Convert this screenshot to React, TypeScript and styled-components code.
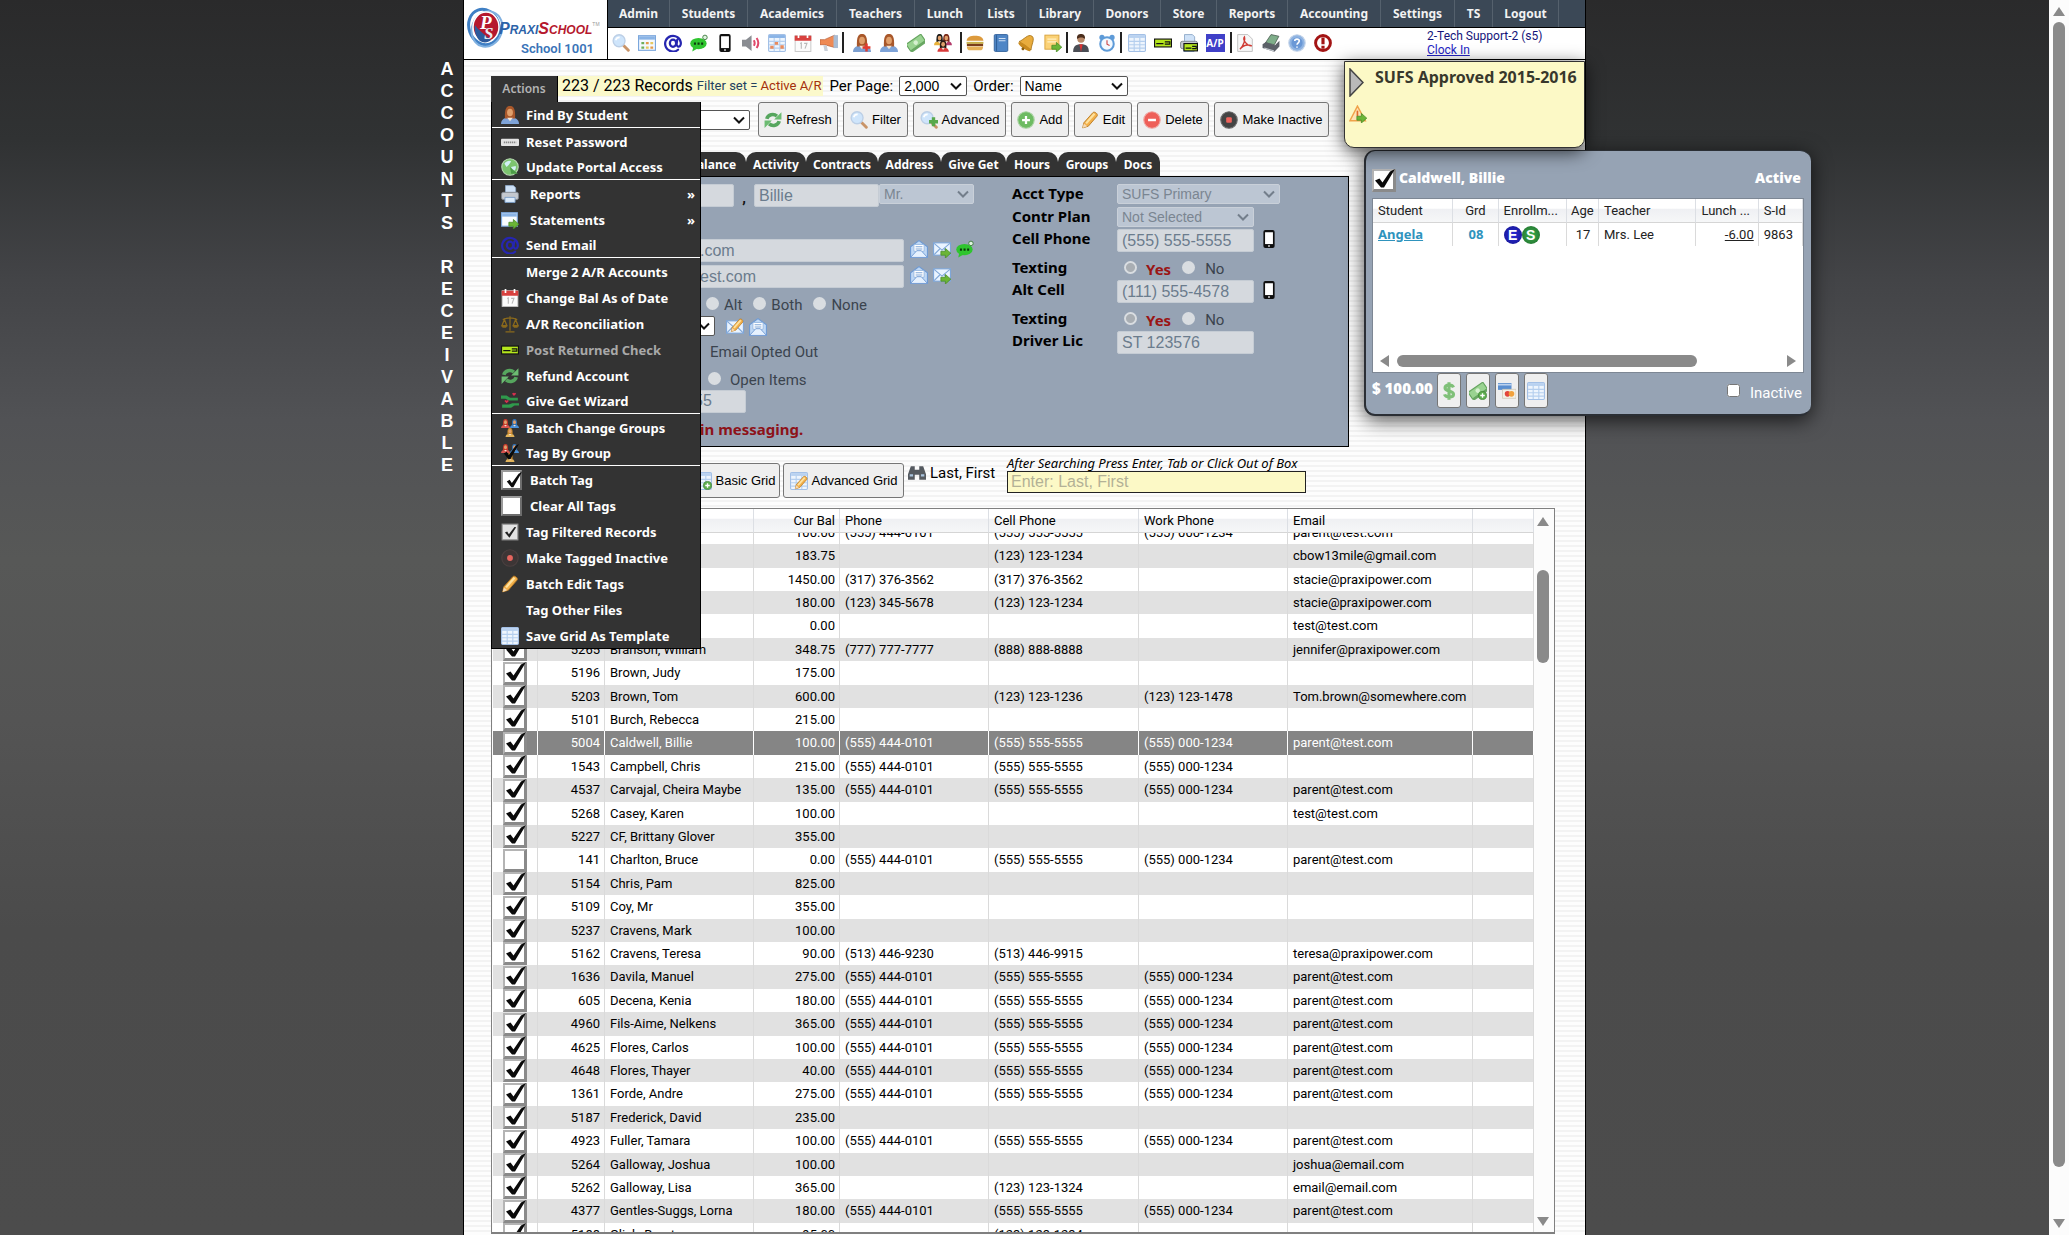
import React, { useEffect, useRef, useState } from "react";
import styled, { createGlobalStyle, css } from "styled-components";

const REG = `Roboto, "Liberation Sans", sans-serif`;
const BOLD = `"Noto Sans", "Open Sans", sans-serif`;
const ARIAL = `"Liberation Sans", Arial, sans-serif`;
const SLATE = "#96a3b4";
const DARK = "#333333";
const NOTE = "#fcf9c6";

const Global = createGlobalStyle`
  *, *::before, *::after { box-sizing: border-box; }
  html, body { margin: 0; height: 100%; overflow: hidden; }
  body { font-family: ${REG}; color: #000; }
  #root { height: 100%; }
  button, input, select { margin: 0; font-family: ${ARIAL}; }
`;

/* ---------- icons ---------- */

const person = (x: number, y: number, hair: string, body: string, k = 1) => (
  <g transform={`translate(${x} ${y}) scale(${k})`}>
    <path d="M0 16c0-4 3-6 8-6s8 2 8 6z" fill={body} />
    <path d="M3.500 11C3 2 5 0 8 0s5 2 4.500 11z" fill={hair} />
    <ellipse cx="8" cy="5.800" rx="2.600" ry="3.400" fill="#e0a06c" />
    <path d="M5.500 10.500l2.500 3 2.500-3z" fill="#f4e4d4" />
  </g>
);
const cheque = (x = 0, y = 4, w = 16, h = 8) => (
  <g>
    <rect x={x + 0.5} y={y + 0.5} width={w - 1} height={h - 1} fill="#b5e61d" stroke="#111" />
    <path d={`M${x + 2} ${y + 4.5}h${w * 0.4}M${x + w * 0.6} ${y + 3}h${w * 0.28}v2h-${w * 0.28}`} stroke="#111" fill="none" />
  </g>
);
const sheet = (
  <g>
    <rect x=".5" y=".5" width="15" height="15" rx="1" fill="#eef5fd" stroke="#a3c0e6" />
    <path d="M1 1h14v2.500H1z" fill="#b9d2f0" />
    <path d="M1 6.500h14M1 9.500h14M1 12.500h14M5.500 3v12M10.500 3v12" stroke="#b5cfee" />
  </g>
);
const lens = (
  <g>
    <path d="M10.500 10.500l4 4" stroke="#c99468" strokeWidth="2.600" strokeLinecap="round" />
    <circle cx="6.300" cy="6" r="5.300" fill="#cfe5fb" stroke="#bccfe6" strokeWidth="1.200" />
    <path d="M3.300 5.500c.5-2 2-2.500 3.500-2.500" stroke="#fff" strokeWidth="1.400" fill="none" />
  </g>
);
const money = (
  <g transform="rotate(-35 8 8)">
    <rect x="0" y="6" width="16" height="7" fill="#6aa864" />
    <rect x="0" y="4" width="16" height="7" fill="#9ad391" stroke="#66a560" />
    <circle cx="8" cy="7.500" r="2" fill="#d6f0d0" />
  </g>
);
const envelope = (
  <g>
    <rect x=".5" y="2.500" width="15" height="11" fill="#eaf4ff" stroke="#7fa6d8" />
    <path d="M1 3l7 6L15 3M1 13l5-5M15 13l-5-5" stroke="#7fa6d8" fill="none" />
  </g>
);
const arrowGreen = <path d="M7 10h4V7.500l4.800 4.200L11 16v-2.500H7z" fill="#6bb536" stroke="#4a8c26" strokeWidth=".7" />;
const pencil = (
  <g>
    <path d="M1.500 15l1-4.500L10.500 1.500c1.500-1.500 5 1.200 3.800 3L6.500 13.500z" fill="#f3b04a" stroke="#b97a22" strokeWidth=".8" />
    <path d="M4.500 11l7.500-8.500" stroke="#fde2a0" strokeWidth="2" />
    <path d="M1.500 15l1-4 3 2.500z" fill="#f4d9b5" />
  </g>
);
const recycle = (
  <g fill="none" stroke="#56a65e" strokeWidth="3.200">
    <path d="M2.500 7c1-4 6-5 9-2.500" />
    <path d="M13.500 9c-1 4-6 5-9 2.500" />
    <path d="M9 7.500h6.500V1zM7 8.500H.5V15z" fill="#6cbc72" stroke="none" />
  </g>
);
const tick = <path d="M2.500 8.500L5 6.800l2 3L13 1.500 16 0 8.300 13.500H6.600z" fill="#0b0b0b" />;
const plusDot = (
  <g>
    <circle cx="12" cy="12" r="3.600" fill="#5eae4f" stroke="#3c7e33" strokeWidth=".6" />
    <path d="M12 10v4M10 12h4" stroke="#fff" strokeWidth="1.200" />
  </g>
);
const printer = (
  <g>
    <path d="M4 .5h7l2 2V8H4z" fill="#cfe2f8" stroke="#8fa9c8" strokeWidth=".8" />
    <rect x=".5" y="6.500" width="15" height="6.500" rx="1.500" fill="#c4c8cf" stroke="#7d838c" strokeWidth=".8" />
    <path d="M3.500 11h9v4.500h-9z" fill="#dcebfb" stroke="#7b9ec8" strokeWidth=".8" />
  </g>
);
const groups = (
  <g>
    {person(0, 0, "#c0392b", "#d9534f", 0.5)}
    {person(8, 0, "#2f6fb0", "#4a90d9", 0.5)}
    {person(4, 8, "#c98a2b", "#e2b35a", 0.5)}
  </g>
);
const disc = (fill: string, stroke: string) => <circle cx="8" cy="8" r="7.300" fill={fill} stroke={stroke} />;

const ICONS: Record<string, React.ReactNode> = {
  search: lens,
  searchPlus: (<g>{lens}<path d="M8 8h2.500V5.500h3V8H16v3h-2.500v2.500h-3V11H8z" fill="#58a94c" /></g>),
  table: (
    <g>
      <rect x=".5" y="1.500" width="15" height="13" fill="#f4f9ff" stroke="#7ba7dc" />
      <path d="M1 2h14v3H1z" fill="#8ab4e6" />
      <path d="M3 7h2.500v2H3zM3 11h2.500v2H3z" fill="#6fae5a" />
      <path d="M7 7h2.500v2H7zM11 11h2.500v2H11z" fill="#e29a4a" />
      <path d="M11 7h2.500v2H11zM7 11h2.500v2H7z" fill="#e7c860" />
    </g>
  ),
  at: (
    <g fill="none" stroke="#2626b0" strokeLinecap="round">
      <path d="M12.500 14A7 7 0 1 1 15 8c0 3-1.500 3.500-2.500 3.200S11 9.500 11.300 8l.5-3" strokeWidth="2" />
      <ellipse cx="8" cy="8.200" rx="2.800" ry="3.200" strokeWidth="2" />
    </g>
  ),
  chat: (
    <g>
      <ellipse cx="7.500" cy="8.500" rx="7.300" ry="5" fill="#2fc52f" />
      <path d="M3 11l-1 4.500 5.500-3z" fill="#2fc52f" />
      <path d="M3.500 8.500h1.800M6.700 8.500h1.800M9.900 8.500h1.800" stroke="#0c3a0c" strokeWidth="2" />
      <circle cx="13.300" cy="3" r="2" fill="#dff3df" stroke="#3c7a3c" strokeWidth=".8" />
    </g>
  ),
  phone: (
    <g>
      <rect x="3" y="0" width="10" height="16" rx="1.800" fill="#101010" />
      <rect x="4.500" y="2" width="7" height="10.500" fill="#fff" />
      <circle cx="8" cy="14.200" r=".9" fill="#ccc" />
    </g>
  ),
  speaker: (
    <g>
      <path d="M0 5h3.500L8.500 1v14L3.500 11H0z" fill="#8a8d92" />
      <path d="M10.500 5.500q1.500 2.500 0 5M13 3.500q3 4.500 0 9" stroke="#e0486a" strokeWidth="1.800" fill="none" />
    </g>
  ),
  calGrid: (
    <g>
      {sheet}
      <path d="M1 1h14v2.500H1z" fill="#8ab4e6" />
      <path d="M6 7h3v2.500H6zM2 10.500h3V13H2zM11 10h3v3h-3z" fill="#e98b5c" />
    </g>
  ),
  calendar: (
    <g>
      <rect x="1" y="1.500" width="14" height="14" fill="#fbfbfb" stroke="#c5c5c5" strokeWidth=".8" />
      <path d="M.6 1.500h14.800V6H.6z" fill="#d8413f" />
      <path d="M4 0v3.500M12 0v3.500" stroke="#fff" strokeWidth="1.500" />
      <path d="M5.500 8.500L6.500 8v5M9 8.300h2.500L9.800 13" stroke="#b9b9b9" fill="none" />
    </g>
  ),
  megaphone: (
    <g>
      <path d="M0 5h4l9-4v11L4 9.500H0z" fill="#ef8a54" stroke="#b65a30" strokeWidth=".6" />
      <path d="M12 1h4v11.500h-4z" fill="#a9bcd3" />
      <path d="M3 10h3l1 5H4z" fill="#c9cfd8" />
    </g>
  ),
  userAdd: (<g>{person(0, 0, "#a8572a", "#7c9fd0")}<path d="M12 8.500v7M8.500 12h7" stroke="#e23b30" strokeWidth="2.200" /></g>),
  user: person(0, 0, "#a8572a", "#7ea3d8"),
  money,
  moneyAdd: (<g>{money}{plusDot}</g>),
  people: (<g>{person(0, 0, "#1c1c1c", "#e8b13a", 0.62)}{person(6, 0, "#7a2a1a", "#b33a6a", 0.62)}{person(3, 5.5, "#2a1a14", "#d83a3a", 0.64)}</g>),
  burger: (
    <g>
      <path d="M.5 6C1 2.500 4 1.500 8 1.500s7 1 7.500 4.500z" fill="#dd9a3c" />
      <path d="M.5 7h15v1.800H.5z" fill="#c9b24a" />
      <path d="M.8 8.800h14.400v2H.8z" fill="#7a3d1c" />
      <path d="M.8 11h14.400c0 2.500-1 3.500-3 3.500H3.800c-2 0-3-1-3-3.500z" fill="#e6b158" />
    </g>
  ),
  book: (
    <g>
      <rect x="2" y=".5" width="12" height="15" rx="1" fill="#4f86c6" stroke="#2f5f98" strokeWidth=".8" />
      <path d="M4 1v14" stroke="#2f5f98" />
      <path d="M6 4h6M6 6h6" stroke="#cfe0f4" />
    </g>
  ),
  bell: (
    <g transform="rotate(35 8 8)">
      <path d="M8 .5c-4 0-4 7-6.500 10.500h13C12 7.500 12 .5 8 .5z" fill="#e9ac3d" stroke="#a87418" strokeWidth=".7" />
      <ellipse cx="8" cy="12" rx="6.500" ry="1.800" fill="#c98a1e" />
      <circle cx="8" cy="14.300" r="1.300" fill="#8d5f12" />
    </g>
  ),
  note: (<g><rect x=".8" y="1" width="12.500" height="12.500" fill="#fbd277" stroke="#d7a13a" strokeWidth=".8" /><path d="M3 4.500h8M3 7h8" stroke="#fff0c4" />{arrowGreen}</g>),
  man: (
    <g>
      <path d="M1 16c0-5 2-7 7-7s7 2 7 7z" fill="#4b4e55" />
      <path d="M6.500 9h3L8 16z" fill="#d33" />
      <circle cx="8" cy="4.500" r="3.300" fill="#b98a6a" />
      <path d="M4.500 4.500C4 1 6 0 8 0s4 1 3.500 4.500C10.500 2.500 6 2.500 4.500 4.500z" fill="#4a2d1c" />
    </g>
  ),
  clock: (
    <g>
      <circle cx="3.500" cy="3" r="2.300" fill="#5e9bd8" />
      <circle cx="12.500" cy="3" r="2.300" fill="#5e9bd8" />
      <circle cx="8" cy="8.800" r="6" fill="#f3f9ff" stroke="#5e9bd8" strokeWidth="1.800" />
      <path d="M8 5.500V9l2.300 1.200" stroke="#c44" fill="none" />
    </g>
  ),
  grid: sheet,
  cheque: cheque(),
  printerCheque: (<g>{printer}{cheque(3, 8, 13, 7.5)}</g>),
  pdf: (
    <g>
      <path d="M1.500.5h9l4 4v11h-13z" fill="#f7f7f7" stroke="#bdbdbd" strokeWidth=".8" />
      <path d="M3.500 13.500C7 10 8.500 5 7.500 2.500 5.500 5 10 11 14 10.500 10 9 6 10.500 3.500 13.500z" fill="none" stroke="#cf3a33" strokeWidth="1.200" />
    </g>
  ),
  scanner: (
    <g>
      <path d="M3 8l5-7.500 7 1.500-4 7.500z" fill="#7fae8a" stroke="#4a5a50" strokeWidth=".7" />
      <path d="M.5 9l3-2 8 3 4-4v5l-4.500 4.800L.5 12.500z" fill="#5b6068" />
      <path d="M2 12.500l8.500 2.500" stroke="#c5cad0" />
    </g>
  ),
  help: (
    <g>
      {disc("#8fb4e2", "#c3d3e8")}
      <circle cx="8" cy="8" r="5" fill="#6a98d6" />
      <path d="M6 6.300C6 4 10 4 10 6.300 10 7.800 8 7.800 8 9.500M8 11v1.300" stroke="#fff" strokeWidth="1.400" fill="none" />
    </g>
  ),
  alert: (
    <g>
      <circle cx="8" cy="8" r="6.600" fill="#fff" stroke="#a31414" strokeWidth="2.600" />
      <path d="M8 3v6M8 10.500v2.500" stroke="#a31414" strokeWidth="2.800" />
    </g>
  ),
  refresh: recycle,
  add: (<g>{disc("#6dbb62", "#a9d3a2")}<path d="M8 4.500v7M4.500 8h7" stroke="#fff" strokeWidth="2" /></g>),
  pencil,
  remove: (<g>{disc("#ee5f58", "#f0a5a1")}<path d="M4.500 8h7" stroke="#fff" strokeWidth="2.200" /></g>),
  record: (<g>{disc("#444", "#6a6a6a")}<rect x="5.500" y="5.500" width="5" height="5" rx="1" fill="#f0635c" /></g>),
  recordDark: (<g>{disc("#3d3535", "#4b4040")}<circle cx="8" cy="8" r="2.600" fill="#e5655e" /></g>),
  keyboard: (<g><rect x="0" y="5" width="16" height="6.500" rx=".8" fill="#e4e4e4" /><path d="M2.500 8.300h11" stroke="#888" strokeDasharray="1.200 .6" strokeWidth="1.400" /></g>),
  globe: (
    <g>
      {disc("#7cc46f", "#b9d9b4")}
      <path d="M3 5c2-3 5-3 6-2L7 6 5 8zM9 8l4-1c1 2-1 5-3 5z" fill="#d3f0f5" />
      <path d="M8 8l7 6H9z" fill="#4c9c46" />
    </g>
  ),
  printer,
  windowArrow: (<g><rect x=".5" y="1.500" width="14" height="12" fill="#fafdff" stroke="#7ba7dc" /><path d="M1 2h13v3H1z" fill="#8ab4e6" />{arrowGreen}</g>),
  scales: (
    <g fill="none" stroke="#8b6a1c" strokeWidth="1.100">
      <path d="M8 1v13M4 15h8M1.500 4q6.500-3 13 0M3 4L.8 9.500h4.400zM13 4l-2.200 5.500h4.400z" />
      <path d="M.5 9.500h5l-1 1.500h-3zM10.500 9.500h5l-1 1.500h-3z" fill="#8b6a1c" strokeWidth=".5" />
    </g>
  ),
  hands: (
    <g>
      <path d="M0 3h5l3 2h7v2.500H7L4 6H0zM16 12h-4l-3 2H1v-3h6l3-1h6z" fill="#2f9a4c" />
      <path d="M11.500 3.500L9.800 1.500l1-.9.9.6.8-.6 1 .9zM5 10L3 8l1-1 1 .7L6 7l1 1z" fill="#d9304f" />
    </g>
  ),
  groups,
  groupsTag: (<g>{groups}{tick}</g>),
  tagGrey: (<g><rect x="1" y="1" width="14" height="14" fill="#e2e2e2" stroke="#8d8d8d" /><path d="M3.500 8.500l2-1 1.500 2.500 5-6.500 1.500.3L7.500 13z" fill="#222" /></g>),
  mailOpen: (
    <g>
      <path d="M.5 6L8 .5 15.500 6v9.500H.5z" fill="#bfd8f5" stroke="#6f9ad2" />
      <path d="M3.500 4h9v6h-9z" fill="#fff" stroke="#8fb2de" strokeWidth=".7" />
      <path d="M5 6h6M5 8h6" stroke="#7fa6d8" />
      <path d="M.5 15.500L6 9.500h4l5.500 6z" fill="#e6f1fe" stroke="#6f9ad2" strokeWidth=".8" />
    </g>
  ),
  mailSend: (<g>{envelope}{arrowGreen}</g>),
  mailEdit: (<g>{envelope}<g transform="translate(3.500 0) scale(.8)">{pencil}</g></g>),
  binoculars: (
    <g fill="#555a60">
      <path d="M2.500 2h3.500v3h4V2h3.500L16 9v5h-6V9.500H6V14H0V9z" />
      <path d="M1.500 10h3M11.500 10h3" stroke="#a9c3dd" strokeWidth="2" />
    </g>
  ),
  warn: (<g><path d="M7.500 1L14.500 14H.8z" fill="#fde3b4" stroke="#f0a24a" strokeWidth="1.300" /><path d="M7.500 5v5" stroke="#e06a2a" strokeWidth="1.500" />{arrowGreen}</g>),
  gridAdd: (<g>{sheet}{plusDot}</g>),
  gridEdit: (<g>{sheet}<g transform="translate(3.500 3) scale(.8)">{pencil}</g></g>),
  dollar: (
    <g fill="none" stroke="#7fc078" strokeWidth="2.800">
      <path d="M12 4.800C11 2 4.500 2 4.500 5.300S12 7.500 12 10.800 5 14 4 11M8 .3v15.400" />
    </g>
  ),
  cards: (
    <g>
      <path d="M0 1h12v6H0z" fill="#5b8fd0" />
      <path d="M0 2.500h12" stroke="#dce9f8" />
      <path d="M4 6.500h12v8H4z" fill="#f3f0e6" stroke="#c9c2ad" strokeWidth=".6" />
      <circle cx="8.500" cy="10.500" r="2.500" fill="#e2453c" />
      <circle cx="12" cy="10.500" r="2.500" fill="#f2a23c" />
    </g>
  ),
};

const Svg = styled.svg`
  display: block;
  flex: none;
`;
const Icon = ({ name, size = 18 }: { name: string; size?: number }) => (
  <Svg width={size} height={size} viewBox="0 0 16 16" aria-hidden="true">
    {ICONS[name]}
  </Svg>
);

/* ---------- page frame ---------- */

const Desktop = styled.div`
  display: flex;
  height: 100vh;
  background: linear-gradient(#2a2a2b 0, #303233 140px, #434447 280px, #515255 420px, #575857 560px, #545454 720px, #4b4b4b 930px, #4c4c4c 100%);
`;
const Stage = styled.div`
  flex: 1;
  display: grid;
  grid-template-columns: 1fr 1123px 1fr;
  min-width: 0;
`;
const SideTitle = styled.h1`
  justify-self: end;
  margin: 0;
  padding: 58px 8px 0 0;
  width: 24px;
  font: bold 18px/22px ${ARIAL};
  color: #fff;
  text-align: center;
  white-space: pre-line;
`;
const Page = styled.div`
  position: relative;
  display: flex;
  flex-direction: column;
  min-height: 0;
  border: solid #000;
  border-width: 0 1px;
  background: repeating-linear-gradient(#f3f3f3 0 2px, #fdfdfd 2px 5px);
`;
const WindowBar = styled.div`
  display: flex;
  flex-direction: column;
  align-items: center;
  width: 20px;
  padding: 7px 0;
  background: #fcfcfc;
`;
const WindowThumb = styled.div`
  flex: 1;
  width: 12px;
  margin: 6px 0 52px;
  border-radius: 6px;
  background: #8a8a8a;
`;
const Arrow = styled.span<{ $dir: "up" | "down" | "left" | "right" }>`
  flex: none;
  width: 0;
  height: 0;
  border: 0 solid transparent;
  ${({ $dir }) =>
    ({
      up: css`border-width: 0 6px 9px; border-bottom-color: #8a8a8a;`,
      down: css`border-width: 9px 6px 0; border-top-color: #8a8a8a;`,
      left: css`border-width: 6px 9px 6px 0; border-right-color: #8a8a8a;`,
      right: css`border-width: 6px 0 6px 9px; border-left-color: #8a8a8a;`,
    })[$dir]}
`;

/* ---------- header ---------- */

const Header = styled.header`
  display: flex;
  height: 60px;
  border-bottom: 1px solid #000;
  background: #fff;
`;
const Brand = styled.div`
  display: flex;
  width: 144px;
  padding: 7px 0 0 3px;
  border-right: 1px solid #000;
`;
const BrandText = styled.div`
  flex: 1;
  padding: 14px 0 0 0;
`;
const BrandName = styled.div`
  display: flex;
  margin-left: -6px;
  font: italic 900 12px/16px ${ARIAL};
  color: #2b62a8;
  white-space: nowrap;
  em { color: #b5182e; }
  big { font-size: 16px; }
  sup { font: 5px/6px ${ARIAL}; color: #999; }
`;
const SchoolName = styled.div`
  padding-left: 16px;
  font: 600 13px/22px ${REG};
  color: #3a74b8;
  white-space: nowrap;
`;
const HeaderMain = styled.div`
  flex: 1;
  display: flex;
  flex-direction: column;
`;
const Nav = styled.nav`
  display: flex;
  height: 28px;
  border-bottom: 1px solid #000;
  background: #3b4856;
`;
const NavLink = styled.a<{ $w: number }>`
  width: ${(p) => p.$w}px;
  border-right: 1px solid #55616d;
  font: bold 12px/27px ${BOLD};
  color: #f2f2f2;
  text-align: center;
  text-decoration: none;
`;
const Tools = styled.div`
  flex: 1;
  display: flex;
  align-items: center;
  padding-bottom: 2px;
`;
const ToolGroup = styled.div<{ $pitch?: number; $pad?: number }>`
  display: grid;
  grid-auto-flow: column;
  grid-auto-columns: ${(p) => p.$pitch ?? 26}px;
  padding: 0 ${(p) => p.$pad ?? 0}px;
  & + & { border-left: 2px solid #222; }
`;
const Tool = styled.button`
  display: grid;
  place-items: center;
  height: 21px;
  padding: 0;
  border: 0;
  background: none;
`;
const ApBadge = styled.span`
  width: 19px;
  background: #4040c8;
  font: bold 10px/18px ${BOLD};
  color: #fff;
`;
const UserBox = styled.div`
  margin-left: auto;
  width: 158px;
  font: 12px/14px ${REG};
  color: #14147a;
  a { display: block; color: #2323c4; }
`;

/* ---------- command rows ---------- */

const Body = styled.main`
  flex: 1;
  display: flex;
  flex-direction: column;
  min-height: 0;
  padding: 16px 30px 1px 27px;
`;
const StatusRow = styled.div`
  display: flex;
  height: 26px;
`;
const ActionsTab = styled.button`
  width: 67px;
  border: 0;
  border-right: 1px solid #000;
  background: ${DARK};
  font: 600 12px/24px ${BOLD};
  color: #b4b4b4;
`;
const Counts = styled.div`
  display: flex;
  height: 20px;
  padding: 0 2px 0 4px;
  gap: 4px;
  background: #fbf9cb;
  line-height: 20px;
  white-space: nowrap;
  strong { font-weight: 400; font-size: 16px; }
  span { font-size: 13px; color: #23405f; }
  b { font-weight: 400; color: #a4300c; }
`;
const Pick = styled.label`
  display: flex;
  gap: 6px;
  height: 20px;
  padding-left: 6px;
  font-size: 15px;
  line-height: 20px;
  white-space: nowrap;
`;
const ChevronWrap = styled.span<{ $w: number }>`
  display: grid;
  flex: none;
  width: ${(p) => p.$w}px;
  > * { grid-area: 1 / 1; }
  > svg { justify-self: end; align-self: center; margin-right: 5px; pointer-events: none; }
`;
const SelectBox = styled.select`
  appearance: none;
  width: 100%;
  height: 20px;
  padding: 0 4px;
  border: 1px solid #555;
  border-radius: 2px;
  background: #fff;
  font-size: 14px;
  color: #000;
  opacity: 1;
  &:disabled { border-color: #c9d0d9; background: #bcc6d3; color: #7a8591; opacity: 1; }
`;
const Select = ({ value, w, off, label }: { value: string; w: number; off?: boolean; label: string }) => (
  <ChevronWrap $w={w}>
    <SelectBox aria-label={label} disabled={off} defaultValue={value}>
      <option>{value}</option>
    </SelectBox>
    <svg width="12" height="8" viewBox="0 0 12 8" aria-hidden="true">
      <path d="M1 1.500l5 5 5-5" fill="none" stroke={off ? "#737e8b" : "#111"} strokeWidth="2" />
    </svg>
  </ChevronWrap>
);
const CommandRow = styled.div`
  display: flex;
  align-items: center;
  gap: 5px;
  height: 35px;
  padding-left: 187px;
  > span:first-child { margin-right: 3px; }
`;
const Push = styled.button<{ $w: number }>`
  display: flex;
  flex: none;
  align-items: center;
  justify-content: center;
  gap: 4px;
  width: ${(p) => p.$w}px;
  height: 35px;
  padding: 0;
  border: 1px solid #767676;
  border-radius: 3px;
  background: #efefef;
  font-size: 13px;
  color: #000;
  white-space: nowrap;
`;

/* ---------- account panel ---------- */

const Tabs = styled.div`
  display: flex;
  height: 24px;
  margin-top: 15px;
  padding-left: 188px;
`;
const Tab = styled.button<{ $w: number }>`
  width: ${(p) => p.$w}px;
  padding: 0;
  border: 0;
  border-radius: 10px 10px 0 0;
  background: ${DARK};
  font: bold 12px/26px ${BOLD};
  color: #fff;
  white-space: nowrap;
`;
const Panel = styled.section`
  display: flex;
  justify-content: space-between;
  width: 858px;
  height: 271px;
  padding: 7px 68px 0 188px;
  border: 1px solid #000;
  background: ${SLATE};
`;
const Stack = styled.div`
  display: flex;
  flex-direction: column;
`;
const Line = styled.div<{ $h: number; $gap?: number; $top?: boolean }>`
  display: flex;
  align-items: ${(p) => (p.$top ? "flex-start" : "center")};
  gap: ${(p) => p.$gap ?? 0}px;
  height: ${(p) => p.$h}px;
  font-size: 15px;
  color: #3b444e;
  white-space: nowrap;
`;
const Field = styled.input<{ $w: number; $pad?: number }>`
  width: ${(p) => p.$w}px;
  height: 23px;
  padding: 0 0 0 ${(p) => p.$pad ?? 4}px;
  border: 1px solid #c5ccd4;
  border-radius: 2px;
  background: #d5d9de;
  font-size: 16px;
  color: #6b7c8d;
`;
const Comma = styled.span`
  width: 20px;
  padding-top: 5px;
  text-align: center;
  font-weight: 700;
  color: #111;
`;
const Icons = styled.span`
  display: flex;
  gap: 5px;
  padding: 1px 0 0 6px;
`;
const IconButton = styled.button`
  padding: 0;
  border: 0;
  background: none;
`;
const Dot = styled.input`
  appearance: none;
  width: 13px;
  height: 13px;
  border-radius: 50%;
  background: #d9dde1;
  &:checked { background: radial-gradient(circle, #a9aeb3 0 4px, #d9dde1 5px); }
`;
const Choices = styled.div<{ $pad: number }>`
  display: flex;
  gap: 11px;
  padding-left: ${(p) => p.$pad}px;
`;
const Choice = styled.label<{ $gap: number; $hot?: boolean }>`
  display: flex;
  align-items: center;
  gap: ${(p) => p.$gap}px;
  ${(p) => p.$hot && css`font: bold 15px/20px ${BOLD}; color: #9a1515;`}
  span { padding-top: 4px; }
`;
const OptedOut = styled.span`
  padding-left: 30px;
`;
const Alert = styled.p`
  margin: 0;
  padding-left: 20px;
  font: bold 15px/32px ${BOLD};
  color: #8d1219;
`;
const Caption = styled.label`
  width: 105px;
  font: bold 15px/18px ${BOLD};
  color: #000;
`;

/* ---------- search row ---------- */

const SearchRow = styled.div`
  display: flex;
  align-items: flex-start;
  height: 61px;
  padding: 16px 0 0 198px;
`;
const GridButtons = styled.div`
  display: flex;
  gap: 3px;
`;
const NameMode = styled.span`
  display: flex;
  align-items: center;
  gap: 4px;
  width: 103px;
  padding-left: 4px;
  font-size: 15px;
  line-height: 20px;
  white-space: nowrap;
`;
const Finder = styled.label`
  display: flex;
  flex-direction: column;
  width: 299px;
  margin-top: -7px;
  font: italic 13px/15px ${BOLD};
  white-space: nowrap;
`;
const FinderInput = styled.input`
  height: 22px;
  padding: 0 3px;
  border: 1px solid #222;
  background: ${NOTE};
  font-size: 16px;
  &::placeholder { color: #b3b196; opacity: 1; }
`;

/* ---------- grid ---------- */

const GridFrame = styled.section`
  flex: 1;
  display: flex;
  min-height: 0;
  border: 1px solid #808080;
  border-width: 1px 1px 2px;
  background: #fcfcfc;
`;
const Viewport = styled.div`
  flex: 1;
  margin-left: 1px;
  overflow: auto;
  scrollbar-width: none;
`;
const Data = styled.table`
  width: 100%;
  table-layout: fixed;
  border-spacing: 0;
  font-size: 13px;
  background: #fff;
`;
const HeadCell = styled.th<{ $right?: boolean; $mid?: boolean }>`
  position: sticky;
  top: 0;
  z-index: 1;
  height: 24px;
  padding: ${(p) => (p.$mid ? "0" : "0 4px 0 5px")};
  border-right: 1px solid #dcdfe4;
  border-bottom: 1px solid #d5d5d5;
  background: linear-gradient(#fff 40%, #eff0f3 45%, #f6f7f8 100%);
  font-weight: 400;
  text-align: ${(p) => (p.$right ? "right" : p.$mid ? "center" : "left")};
  overflow: hidden;
  white-space: nowrap;
  text-overflow: ellipsis;
`;
const Row = styled.tr<{ $on?: boolean }>`
  height: 23px;
  &:nth-child(5n + 2), &:nth-child(5n) { height: 24px; }
  &:nth-child(even) { background: #e1e1e1; }
  ${(p) => p.$on && css`&&& { background: #858585; color: #fff; } td { border-color: #fff; }`}
`;
const Cell = styled.td<{ $right?: boolean; $mid?: boolean }>`
  padding: 0 4px 0 5px;
  border-right: 1px solid #dadada;
  text-align: ${(p) => (p.$right ? "right" : p.$mid ? "center" : "left")};
  line-height: 20px;
  white-space: nowrap;
`;
const TagCell = styled(Cell)`
  padding: 0 0 0 10px;
`;
const Rail = styled.div`
  display: flex;
  flex-direction: column;
  align-items: center;
  width: 20px;
  padding: 8px 2px 6px 0;
  background: #fcfcfc;
`;
const RailThumb = styled.div`
  width: 12px;
  height: 93px;
  margin: 44px 0 auto;
  border-radius: 6px;
  background: #8a8a8a;
`;
const TagWrap = styled.label`
  display: grid;
  width: 24px;
  height: 23px;
  > * { grid-area: 1 / 1; }
  svg { pointer-events: none; }
`;
const TagInput = styled.input`
  appearance: none;
  width: 24px;
  height: 23px;
  border: 2px solid #b4b4b4;
  border-right: 3px solid #8a8a8a;
  border-bottom: 3px solid #8a8a8a;
  background: #fff;
`;
const Tag = ({ on, label }: { on?: boolean; label: string }) => {
  const [checked, setChecked] = useState(!!on);
  return (
    <TagWrap>
      <TagInput type="checkbox" aria-label={label} checked={checked} onChange={() => setChecked(!checked)} />
      {checked && (
        <Svg width="24" height="23" viewBox="0 0 24 23" aria-hidden="true">
          <path d="M3 11.500l4.500-2 3 4L18 2.500 23 0 12 18.500H9z" fill="#0a0a0a" />
        </Svg>
      )}
    </TagWrap>
  );
};

/* ---------- overlays ---------- */

const Menu = styled.ul`
  position: absolute;
  z-index: 3;
  top: 102px;
  left: 27px;
  width: 210px;
  margin: 0;
  padding: 0;
  border: 1px solid #000;
  border-top: 0;
  background: ${DARK};
  list-style: none;
`;
const MenuItem = styled.li<{ $line?: boolean }>`
  height: 26px;
  border-bottom: ${(p) => (p.$line ? "1px solid #fff" : "0")};
`;
const MenuButton = styled.button<{ $off?: boolean; $deep?: boolean }>`
  display: grid;
  grid-template-columns: ${(p) => (p.$deep ? 29 : 25)}px 1fr auto;
  align-items: center;
  width: 100%;
  height: 100%;
  padding: 1px 5px 0 9px;
  border: 0;
  background: none;
  font: bold 13px/24px ${BOLD};
  color: ${(p) => (p.$off ? "#a9a9a9" : "#fff")};
  text-align: left;
  white-space: nowrap;
`;
const MenuMark = styled.span`
  display: grid;
  width: 21px;
  height: 20px;
  border: 2px solid #9a9a9a;
  border-right-color: #6d6d6d;
  border-bottom-color: #6d6d6d;
  background: #fff;
  place-items: center;
`;
const StickyNote = styled.aside`
  position: absolute;
  z-index: 4;
  top: 61px;
  right: 0;
  display: flex;
  gap: 8px;
  width: 241px;
  height: 87px;
  padding: 6px 6px 0 4px;
  border: 1px solid #333;
  border-radius: 0 0 10px 10px;
  background: ${NOTE};
  box-shadow: 0 4px 18px rgba(0, 0, 0, 0.7);
  font: bold 16px/18px ${BOLD};
  color: #38382c;
  white-space: nowrap;
`;
const NoteIcons = styled.div`
  display: flex;
  flex-direction: column;
  gap: 8px;
`;
const Card = styled.section`
  position: absolute;
  z-index: 3;
  top: 150px;
  left: 900px;
  display: flex;
  flex-direction: column;
  width: 447px;
  height: 266px;
  padding: 18px 7px 6px 6px;
  border: 1px solid #2b2f35;
  border-width: 1px 0 2px 2px;
  border-radius: 11px;
  background: ${SLATE};
  box-shadow: 0 4px 20px rgba(0, 0, 0, 0.7);
  font: bold 15px/20px ${BOLD};
  color: #fff;
`;
const CardHead = styled.div`
  display: flex;
  gap: 3px;
  height: 29px;
  padding-right: 3px;
  font-size: 14px;
  > b:last-child { margin-left: auto; }
  > b { line-height: 18px; }
`;
const CardGrid = styled.div`
  flex: 1;
  display: flex;
  flex-direction: column;
  justify-content: space-between;
  border: 1px solid #7d8794;
  background: #fff;
  font: 13px/20px ${REG};
  color: #222;
`;
const CardLink = styled.a`
  font: bold 13px/20px ${BOLD};
  color: #2f93bd;
`;
const Grade = styled.b`
  font: bold 13px/20px ${BOLD};
  color: #2f93bd;
`;
const Badges = styled.span`
  display: flex;
`;
const Badge = styled.span<{ $c: string }>`
  width: 18px;
  height: 18px;
  border-radius: 50%;
  background: ${(p) => p.$c};
  font: bold 14px/18px ${ARIAL};
  color: #fff;
  text-align: center;
`;
const HBar = styled.div`
  display: flex;
  align-items: center;
  height: 22px;
  padding: 0 7px;
`;
const HThumb = styled.div`
  width: 300px;
  height: 12px;
  margin: 0 auto 0 8px;
  border-radius: 6px;
  background: #8a8a8a;
`;
const CardFoot = styled.div`
  display: flex;
  gap: 5px;
  height: 35px;
  > b { width: 60px; line-height: 30px; white-space: nowrap; }
`;
const InactiveBox = styled.label`
  display: flex;
  align-items: center;
  gap: 10px;
  margin-left: auto;
  padding-right: 2px;
  font: 15px/20px ${REG};
  input { width: 13px; height: 13px; }
  span { padding-top: 5px; }
`;

/* ---------- data ---------- */

const NAV: [string, number][] = [
  ["Admin", 62], ["Students", 78], ["Academics", 89], ["Teachers", 78], ["Lunch", 61], ["Lists", 51], ["Library", 67],
  ["Donors", 67], ["Store", 56], ["Reports", 71], ["Accounting", 93], ["Settings", 74], ["TS", 38], ["Logout", 66],
];
const TOOLS: { pitch?: number; pad?: number; items: string[] }[] = [
  { items: ["search", "table", "at", "chat", "phone", "speaker", "calGrid", "calendar", "megaphone"] },
  { pitch: 27, pad: 4, items: ["userAdd", "user", "money", "people"] },
  { items: ["burger", "book", "bell", "note"] },
  { items: ["man", "clock"] },
  { pad: 2, items: ["grid", "cheque", "printerCheque", "ap"] },
  { items: ["pdf", "scanner", "help", "alert"] },
];
const COMMANDS: [string, string, number][] = [
  ["Refresh", "refresh", 80], ["Filter", "search", 65], ["Advanced", "searchPlus", 93], ["Add", "add", 58],
  ["Edit", "pencil", 58], ["Delete", "remove", 72], ["Make Inactive", "record", 115],
];
const TABS: [string, number][] = [
  ["Balance", 67], ["Activity", 60], ["Contracts", 72], ["Address", 63], ["Give Get", 65], ["Hours", 52], ["Groups", 58], ["Docs", 44],
];
type Item = { t: string; i?: string; line?: boolean; deep?: boolean; more?: boolean; off?: boolean };
const MENU: Item[] = [
  { t: "Find By Student", i: "user", line: true },
  { t: "Reset Password", i: "keyboard" },
  { t: "Update Portal Access", i: "globe", line: true },
  { t: "Reports", i: "printer", deep: true, more: true },
  { t: "Statements", i: "windowArrow", deep: true, more: true },
  { t: "Send Email", i: "at", line: true },
  { t: "Merge 2 A/R Accounts" },
  { t: "Change Bal As of Date", i: "calendar" },
  { t: "A/R Reconciliation", i: "scales" },
  { t: "Post Returned Check", i: "cheque", off: true },
  { t: "Refund Account", i: "refresh" },
  { t: "Give Get Wizard", i: "hands", line: true },
  { t: "Batch Change Groups", i: "groups" },
  { t: "Tag By Group", i: "groupsTag", line: true },
  { t: "Batch Tag", i: "box-on", deep: true },
  { t: "Clear All Tags", i: "box", deep: true },
  { t: "Tag Filtered Records", i: "tagGrey" },
  { t: "Make Tagged Inactive", i: "recordDark" },
  { t: "Batch Edit Tags", i: "pencil" },
  { t: "Tag Other Files" },
  { t: "Save Grid As Template", i: "grid" },
];
const H = "(555) 444-0101", C = "(555) 555-5555", W = "(555) 000-1234", P = "parent@test.com";
const ROWS: string[][] = [
  ["", "", "100.00", H, C, W, P],
  ["", "", "183.75", "", "(123) 123-1234", "", "cbow13mile@gmail.com"],
  ["", "", "1450.00", "(317) 376-3562", "(317) 376-3562", "", "stacie@praxipower.com"],
  ["", "", "180.00", "(123) 345-5678", "(123) 123-1234", "", "stacie@praxipower.com"],
  ["", "", "0.00", "", "", "", "test@test.com"],
  ["5265", "Branson, William", "348.75", "(777) 777-7777", "(888) 888-8888", "", "jennifer@praxipower.com"],
  ["5196", "Brown, Judy", "175.00", "", "", "", ""],
  ["5203", "Brown, Tom", "600.00", "", "(123) 123-1236", "(123) 123-1478", "Tom.brown@somewhere.com"],
  ["5101", "Burch, Rebecca", "215.00", "", "", "", ""],
  ["5004", "Caldwell, Billie", "100.00", H, C, W, P],
  ["1543", "Campbell, Chris", "215.00", H, C, W, ""],
  ["4537", "Carvajal, Cheira Maybe", "135.00", H, C, W, P],
  ["5268", "Casey, Karen", "100.00", "", "", "", "test@test.com"],
  ["5227", "CF, Brittany Glover", "355.00", "", "", "", ""],
  ["141", "Charlton, Bruce", "0.00", H, C, W, P],
  ["5154", "Chris, Pam", "825.00", "", "", "", ""],
  ["5109", "Coy, Mr", "355.00", "", "", "", ""],
  ["5237", "Cravens, Mark", "100.00", "", "", "", ""],
  ["5162", "Cravens, Teresa", "90.00", "(513) 446-9230", "(513) 446-9915", "", "teresa@praxipower.com"],
  ["1636", "Davila, Manuel", "275.00", H, C, W, P],
  ["605", "Decena, Kenia", "180.00", H, C, W, P],
  ["4960", "Fils-Aime, Nelkens", "365.00", H, C, W, P],
  ["4625", "Flores, Carlos", "100.00", H, C, W, P],
  ["4648", "Flores, Thayer", "40.00", H, C, W, P],
  ["1361", "Forde, Andre", "275.00", H, C, W, P],
  ["5187", "Frederick, David", "235.00", "", "", "", ""],
  ["4923", "Fuller, Tamara", "100.00", H, C, W, P],
  ["5264", "Galloway, Joshua", "100.00", "", "", "", "joshua@email.com"],
  ["5262", "Galloway, Lisa", "365.00", "", "(123) 123-1324", "", "email@email.com"],
  ["4377", "Gentles-Suggs, Lorna", "180.00", H, C, W, P],
  ["5188", "Glick, Brent", "95.00", "", "(123) 123-1234", "", ""],
];
const COLS = [45, 67, 149, 86, 149, 150, 149, 185];

const MailIcons = ({ chat }: { chat?: boolean }) => (
  <Icons>
    <IconButton aria-label="View email"><Icon name="mailOpen" /></IconButton>
    <IconButton aria-label="Send email"><Icon name="mailSend" /></IconButton>
    {chat && <IconButton aria-label="Text"><Icon name="chat" /></IconButton>}
  </Icons>
);

const YesNo = ({ name }: { name: string }) => (
  <Line $h={26}>
    <Caption as="span">Texting</Caption>
    <Choices $pad={7}>
      <Choice $gap={9} $hot>
        <Dot type="radio" name={name} disabled defaultChecked />
        <span>Yes</span>
      </Choice>
      <Choice $gap={10}>
        <Dot type="radio" name={name} disabled />
        <span>No</span>
      </Choice>
    </Choices>
  </Line>
);

const CardTable = () => (
  <Data>
    <colgroup>
      {[80, 45, 68, 32, 97, 62, 44].map((w, i) => <col key={i} style={{ width: w }} />)}
    </colgroup>
    <thead>
      <tr>
        <HeadCell>Student</HeadCell>
        <HeadCell $mid>Grd</HeadCell>
        <HeadCell>Enrollm...</HeadCell>
        <HeadCell $mid>Age</HeadCell>
        <HeadCell>Teacher</HeadCell>
        <HeadCell>Lunch ...</HeadCell>
        <HeadCell>S-Id</HeadCell>
      </tr>
    </thead>
    <tbody>
      <Row>
        <Cell><CardLink href="#">Angela</CardLink></Cell>
        <Cell $mid><Grade>08</Grade></Cell>
        <Cell>
          <Badges>
            <Badge $c="radial-gradient(#2a2ad8, #15158a)">E</Badge>
            <Badge $c="radial-gradient(#3fae4d, #1c6a2a)">S</Badge>
          </Badges>
        </Cell>
        <Cell $mid>17</Cell>
        <Cell>Mrs. Lee</Cell>
        <Cell $right><u>-6.00</u></Cell>
        <Cell>9863</Cell>
      </Row>
    </tbody>
  </Data>
);

export default function App() {
  const view = useRef<HTMLDivElement>(null);
  useEffect(() => {
    if (view.current) view.current.scrollTop = 12;
  }, []);

  return (
    <Desktop>
      <Global />
      <Stage>
        <SideTitle>{"ACCOUNTS RECEIVABLE".split("").map((c) => (c === " " ? "\u00a0" : c)).join("\n")}</SideTitle>
        <Page>
          <Header>
            <Brand>
              <Svg width="38" height="44" viewBox="0 0 38 44" aria-hidden="true">
                <ellipse cx="17" cy="20" rx="15" ry="18" fill="none" stroke="#3f7fc4" strokeWidth="3" transform="rotate(-20 17 20)" />
                <ellipse cx="20" cy="22" rx="15" ry="18" fill="none" stroke="#7fb0e0" strokeWidth="2" transform="rotate(20 20 22)" />
                <ellipse cx="19" cy="20" rx="13" ry="15" fill="#b5182e" stroke="#fff" strokeWidth="1.500" />
                <path d="M13 34c-4-4-6-10-5-16 3 5 8 8 16 15-3 3-8 3-11 1z" fill="#2c5a9c" />
                <text x="13" y="22" fontFamily="Liberation Serif, serif" fontStyle="italic" fontWeight="bold" fontSize="19" fill="#fff">P</text>
                <text x="17" y="32" fontFamily="Liberation Serif, serif" fontStyle="italic" fontWeight="bold" fontSize="17" fill="#e9eef5">S</text>
              </Svg>
              <BrandText>
                <BrandName>
                  <span><big>P</big>RAXI</span><em><big>S</big>CHOOL</em><sup>TM</sup>
                </BrandName>
                <SchoolName>School 1001</SchoolName>
              </BrandText>
            </Brand>
            <HeaderMain>
              <Nav>
                {NAV.map(([t, w]) => <NavLink key={t} href="#" $w={w}>{t}</NavLink>)}
              </Nav>
              <Tools>
                {TOOLS.map((g, i) => (
                  <ToolGroup key={i} $pitch={g.pitch} $pad={g.pad}>
                    {g.items.map((n) => (
                      <Tool key={n} aria-label={n}>{n === "ap" ? <ApBadge>A/P</ApBadge> : <Icon name={n} />}</Tool>
                    ))}
                  </ToolGroup>
                ))}
                <UserBox>2-Tech Support-2 (s5)<a href="#">Clock In</a></UserBox>
              </Tools>
            </HeaderMain>
          </Header>

          <Body>
            <StatusRow>
              <ActionsTab>Actions</ActionsTab>
              <Counts>
                <strong>223 / 223 Records</strong>
                <span>Filter set = <b>Active A/R</b></span>
              </Counts>
              <Pick>Per Page:<Select label="Per page" value="2,000" w={68} /></Pick>
              <Pick>Order:<Select label="Order" value="Name" w={108} /></Pick>
            </StatusRow>
            <CommandRow>
              <Select label="View" value="" w={72} />
              {COMMANDS.map(([t, i, w]) => <Push key={t} $w={w}><Icon name={i} />{t}</Push>)}
            </CommandRow>

            <Tabs role="tablist">
              {TABS.map(([t, w]) => <Tab key={t} role="tab" $w={w}>{t}</Tab>)}
            </Tabs>
            <Panel>
              <Stack>
                <Line $h={55} $top>
                  <Field aria-label="Last name" $w={54} disabled />
                  <Comma>,</Comma>
                  <Field aria-label="First name" $w={125} disabled defaultValue="Billie" />
                  <Select label="Title" value="Mr." w={95} off />
                </Line>
                <Line $h={26} $top>
                  <Field aria-label="Email" $w={224} $pad={19} disabled defaultValue=".com" />
                  <MailIcons chat />
                </Line>
                <Line $h={26} $top>
                  <Field aria-label="Alternate email" $w={224} $pad={19} disabled defaultValue="est.com" />
                  <MailIcons />
                </Line>
                <Line $h={24}>
                  <Choices $pad={26}>
                    <Choice $gap={5}><Dot type="radio" name="send" disabled /><span>Alt</span></Choice>
                    <Choice $gap={5}><Dot type="radio" name="send" disabled /><span>Both</span></Choice>
                    <Choice $gap={5}><Dot type="radio" name="send" disabled /><span>None</span></Choice>
                  </Choices>
                </Line>
                <Line $h={22} $gap={5}>
                  <Select label="Template" value="" w={35} />
                  <Icons>
                    <IconButton aria-label="Edit template"><Icon name="mailEdit" /></IconButton>
                    <IconButton aria-label="Open template"><Icon name="mailOpen" /></IconButton>
                  </Icons>
                </Line>
                <Line $h={30}><OptedOut>Email Opted Out</OptedOut></Line>
                <Line $h={22}>
                  <Choices $pad={28}>
                    <Choice $gap={9}><Dot type="radio" name="items" disabled /><span>Open Items</span></Choice>
                  </Choices>
                </Line>
                <Line $h={24}>
                  <Field aria-label="Code" $w={66} $pad={13} disabled defaultValue="55" />
                </Line>
                <Alert>in messaging.</Alert>
              </Stack>
              <Stack>
                <Line $h={23} $top><Caption>Acct Type</Caption><Select label="Acct Type" value="SUFS Primary" w={163} off /></Line>
                <Line $h={22} $top><Caption>Contr Plan</Caption><Select label="Contr Plan" value="Not Selected" w={137} off /></Line>
                <Line $h={25} $top>
                  <Caption htmlFor="cell">Cell Phone</Caption>
                  <Field id="cell" $w={137} disabled defaultValue="(555) 555-5555" />
                  <Icons><Icon name="phone" /></Icons>
                </Line>
                <YesNo name="cellText" />
                <Line $h={25} $top>
                  <Caption htmlFor="alt">Alt Cell</Caption>
                  <Field id="alt" $w={137} disabled defaultValue="(111) 555-4578" />
                  <Icons><Icon name="phone" /></Icons>
                </Line>
                <YesNo name="altText" />
                <Line $h={24} $top>
                  <Caption htmlFor="lic">Driver Lic</Caption>
                  <Field id="lic" $w={137} disabled defaultValue="ST 123576" />
                </Line>
              </Stack>
            </Panel>

            <SearchRow>
              <GridButtons>
                <Push $w={91}><Icon name="gridAdd" />Basic Grid</Push>
                <Push $w={121}><Icon name="gridEdit" />Advanced Grid</Push>
              </GridButtons>
              <NameMode><Icon name="binoculars" />Last, First</NameMode>
              <Finder>
                After Searching Press Enter, Tab or Click Out of Box
                <FinderInput placeholder="Enter: Last, First" />
              </Finder>
            </SearchRow>

            <GridFrame>
              <Viewport ref={view}>
                <Data>
                  <colgroup>
                    {COLS.map((w, i) => <col key={i} style={{ width: w }} />)}
                    <col />
                  </colgroup>
                  <thead>
                    <tr>
                      <HeadCell aria-label="Tag" />
                      <HeadCell aria-label="Id" />
                      <HeadCell aria-label="Name" />
                      <HeadCell $right>Cur Bal</HeadCell>
                      <HeadCell>Phone</HeadCell>
                      <HeadCell>Cell Phone</HeadCell>
                      <HeadCell>Work Phone</HeadCell>
                      <HeadCell>Email</HeadCell>
                      <HeadCell />
                    </tr>
                  </thead>
                  <tbody>
                    {ROWS.map((r, i) => (
                      <Row key={i} $on={r[0] === "5004"}>
                        <TagCell><Tag on={r[0] !== "141"} label={`Tag ${r[1]}`} /></TagCell>
                        {r.map((v, k) => <Cell key={k} $right={k === 0 || k === 2}>{v}</Cell>)}
                        <Cell />
                      </Row>
                    ))}
                  </tbody>
                </Data>
              </Viewport>
              <Rail><Arrow $dir="up" /><RailThumb /><Arrow $dir="down" /></Rail>
            </GridFrame>
          </Body>

          <Menu>
            {MENU.map((m) => (
              <MenuItem key={m.t} $line={m.line}>
                <MenuButton $off={m.off} $deep={m.deep}>
                  {m.i === "box" || m.i === "box-on" ? (
                    <MenuMark>{m.i === "box-on" && <Svg width="20" height="18" viewBox="0 0 16 16">{tick}</Svg>}</MenuMark>
                  ) : m.i ? <Icon name={m.i} /> : <span />}
                  <span>{m.t}</span>
                  {m.more && <span>»</span>}
                </MenuButton>
              </MenuItem>
            ))}
          </Menu>

          <StickyNote>
            <NoteIcons>
              <Svg width="15" height="29" viewBox="0 0 15 29" aria-hidden="true">
                <path d="M1 1l13 13.500L1 28z" fill="#b9b9b9" stroke="#444" strokeWidth="1.500" />
              </Svg>
              <Icon name="warn" />
            </NoteIcons>
            SUFS Approved 2015-2016
          </StickyNote>

          <Card>
            <CardHead>
              <Tag on label="Tag Caldwell, Billie" />
              <b>Caldwell, Billie</b>
              <b>Active</b>
            </CardHead>
            <CardGrid>
              <CardTable />
              <HBar><Arrow $dir="left" /><HThumb /><Arrow $dir="right" /></HBar>
            </CardGrid>
            <CardFoot>
              <b>$ 100.00</b>
              {["dollar", "moneyAdd", "cards", "grid"].map((n) => <Push key={n} $w={24} aria-label={n}><Icon name={n} /></Push>)}
              <InactiveBox><input type="checkbox" /><span>Inactive</span></InactiveBox>
            </CardFoot>
          </Card>
        </Page>
      </Stage>
      <WindowBar><Arrow $dir="up" /><WindowThumb /><Arrow $dir="down" /></WindowBar>
    </Desktop>
  );
}
